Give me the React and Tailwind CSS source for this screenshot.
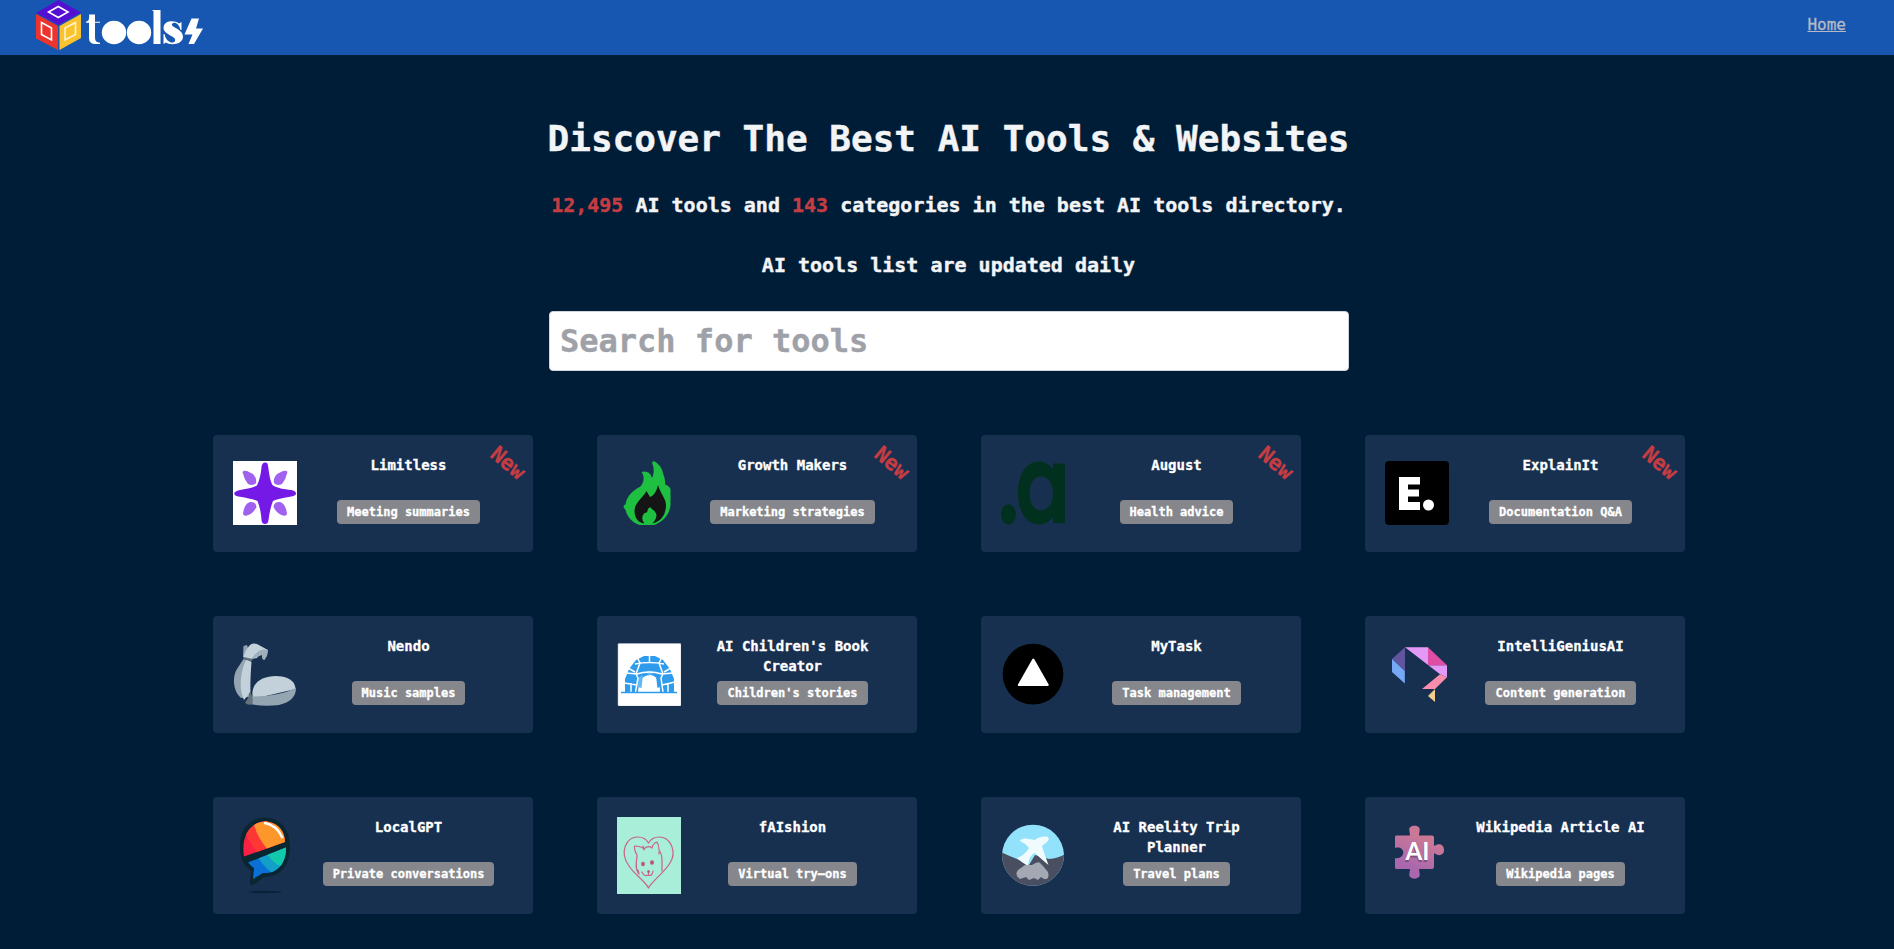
import React from "react";

const svg = "mb-px block h-16 w-16 shrink-0";

const Limitless = () => (
  <svg viewBox="0 0 64 64" className={svg}>
    <rect width="64" height="64" fill="#fff" />
    <g fill="#a062ee">
      <path d="M9.500 11 Q10.500 9 14 10 L20 13 Q24 17 23 22 Q20 25.500 15 23 Q11 18 9.500 11Z" />
      <path d="M54.500 11 Q53.500 9 50 10 L44 13 Q40 17 41 22 Q44 25.500 49 23 Q53 18 54.500 11Z" />
      <path d="M10 53 Q11 55.500 14 54.500 Q20 53 23.500 46 Q23 40.500 17 41 Q11 43 10 53Z" />
      <path d="M54 53 Q53 55.500 50 54.500 Q44 53 40.500 46 Q41 40.500 47 41 Q53 43 54 53Z" />
    </g>
    <path fill="#7519e6" d="M32 1.500 C35 1.500 35 4 35.500 8 C36.500 16 37.500 20 39.500 24 C44 27.500 51 28 58 29 C62 29.800 63 31 63 32.500 C63 34.500 61 35 57 35.700 C49 37 44 38 40 40 C37.500 46 36.500 52 35.500 59 C35 62 34 63 32 63 C30 63 29 62 28.500 59 C28 51 26.500 45 24.500 40 C20 38 14 37 7 35.700 C3 35 1.300 34.500 1.300 32.500 C1.300 31 2.500 30 6 29.200 C13 28 19 27.500 24 24.500 C26.500 19 28 13 28.500 6 C29 3 30 1.500 32 1.500Z" />
  </svg>
);

const GrowthMakers = () => (
  <svg viewBox="-2.500 0 64 64" className={svg}>
    <path fill="#1fbf42" d="M34.500 .3 C40 3 43 8 44 14 Q46 18 45.500 23.500 Q49.500 24.500 51 28 L51 44 C50 54 44 60 35 64 L20 64 C12 61 8 56 6 49 L4 46 Q4 43.500 6 43.500 C7 36 12 30 21 25.500 C25 21 25 15 22 11 Q30 9 32.500 17 C35 12 34.500 6 32.500 2 Q33 0 34.500 .3Z" />
    <path fill="#151515" d="M38.500 24 C41 33 47 38 46.500 45 C46 54 42 60 33 62.500 Q37 58 37 54 C36 49 31 48 31 46 C26 48 30 52 25 52 C22 55 22 59 25 62.500 C19 62 15 57 15 50 C15 42 23 37 27 30 L30.500 36 C35 34 37 30 38.500 24Z" />
  </svg>
);

const August = () => (
  <svg viewBox="0 0 64 64" className={svg}>
    <path fill="#02301f" fillRule="evenodd" d="M52 2.500H64V62H52V56C48 61.500 43 63.500 38 63.500C25 63.500 17 50 17 32C17 14 25 .500 38 .500C43 .500 48 3 52 8ZM40 15.500C33 15.500 28.500 22.500 28.500 32.500C28.500 42 33 49.500 40 49.500C47 49.500 52 42 52 32.500C52 22.500 47 15.500 40 15.500Z" />
    <ellipse cx="7.500" cy="53.500" rx="7.500" ry="10.200" fill="#02301f" />
  </svg>
);

const ExplainIt = () => (
  <svg viewBox="0 0 64 64" className={svg}>
    <rect width="64" height="64" rx="4" fill="#000" />
    <path fill="#fff" d="M14 16H35V23.500H23V28.500H34V35.500H23V41H35V49H14Z" />
    <circle cx="43.500" cy="44" r="5.500" fill="#fff" />
  </svg>
);

const Nendo = () => (
  <svg viewBox="0 0 64 64" className={svg}>
    <path fill="#92a5b0" d="M10.500 4 L14 3 L16 9 L13 16 L10 15ZM10.500 17 L18 19 L16 55 L8 56 C0 49-1 35 4 27Z" />
    <path fill="#c3d1da" d="M17 3 Q19 .500 24 2 L35 8 L34 12 Q27 11 24 16 L17 17 L10.500 15 Q13 7 17 3ZM13 18 L18.500 20 Q17 36 17.500 50 L11 58 C5 47 8 28 13 18Z" />
    <path fill="#9cafbb" d="M34 8 Q36 13 31.500 18 Q28.500 18 29 13 L24 15 L18.500 17 Q26 5 34 8Z" />
    <path fill="#c3d1da" d="M19.500 53 C18 38 35 32 49 34.500 Q62 37 62.500 47 L20 57Z" />
    <path fill="#92a5b0" d="M18 54.500 Q44 55 63 46 Q63 59 46 63 Q30 65 17 62Z" />
    <path fill="#65737c" d="M10.500 15 L19.500 17 L19 19 L10.500 17ZM12 60.500 Q16 56 17 50 Q20.500 54 19.500 62 Q15 64 12 60.500Z" />
  </svg>
);

const Igloo = () => (
  <svg viewBox="0 0 64 64" className={svg}>
    <rect x="1" y="1.500" width="63" height="62.500" rx="1" fill="#fff" stroke="#b5bdc7" strokeWidth=".5" />
    <path fill="#2f9bed" d="M8 50 L8 37 L12 27 L19 18 L27 14 H38 L46 18 L53 27 L57 37 V50Z" />
    <path fill="#fff" d="M21 50 C22 38 24 34 33 33 C41 34 43 40 43 50Z" />
    <path fill="#5eb9f5" d="M20.500 36 L26 33 L24.500 46 L20.500 45ZM29 30 Q33 27 37 30 Q33 36 29 30Z" />
    <path fill="#2f9bed" d="M39 34 L43 36 L43 45 L40.500 46Z" />
    <g fill="none" stroke="#fff" strokeWidth="1.500">
      <path d="M18 22 Q32 19 47 22M9 31 L20 32 Q32 28 45 32 L56 31M7 41 L20 43M45 43 L58 40M32.500 14V21M20 15 L23 21 L19 32 L21 36 L18.500 50M45 15 L42 21 L46 32 L44 36 L46 50M11 26 L18 30M54 26 L47 30M14 41V50M51 41V50" />
    </g>
    <path d="M4 50.500H60" stroke="#2f9bed" strokeWidth="1.300" />
  </svg>
);

const MyTask = () => (
  <svg viewBox="0 0 64 64" className={svg}>
    <circle cx="32" cy="32.200" r="30.400" fill="#000" />
    <path d="M32.300 17.500 L46.800 43H17.800Z" fill="#fff" stroke="#fff" strokeWidth="2" strokeLinejoin="round" />
  </svg>
);

const IntelliGenius = () => (
  <svg viewBox="0 0 64 64" className={svg}>
    <path fill="#62559f" d="M20 5.300V29L7 17Z" />
    <path fill="#75a9f5" d="M7 17L19.800 29V41.500L7 30Z" />
    <path fill="#e29af6" d="M20 5.300H43V23.300H62V35.300L55 32.300Z" />
    <path fill="#e04da5" d="M43 5.300L62 23.300H43Z" />
    <path fill="#fa8dab" d="M55 32.300L62 35.300L50 47H37Z" />
    <path fill="#f4cd8c" d="M50 47V60L43 54Z" />
  </svg>
);

const LocalGPT = () => (
  <svg viewBox="0 0 64 77" className="block h-[77px] w-16 shrink-0">
    <defs>
      <clipPath id="lg-top"><path d="M11 39.500C7 14 23 2 36 5C46 7 52 15 52 25Z" /></clipPath>
      <clipPath id="lg-bottom"><path d="M15 45.500L53 30.500C53 48 43 57 30 56L20 62L21 51Q18 49 15 45.500Z" /></clipPath>
    </defs>
    <path fill="#0a2631" d="M32 .500C47 .500 57 12 57 30C57 48 48 60 31 60L22 67Q17 70 17 65L18 54C10 48 7 40 7 29C7 12 17 .500 32 .500Z" />
    <g clipPath="url(#lg-top)">
      <path fill="#fb2044" d="M0 0H64V45H0Z" />
      <path fill="#fd3734" d="M11 13Q17 27 25 36L40 33L34 0Z" />
      <path fill="#fd972c" d="M20 3Q23 20 36 34L64 30V0Z" />
      <path fill="none" stroke="#fff" strokeWidth="2.500" d="M31 5.700Q44 8 49.500 21" />
    </g>
    <g clipPath="url(#lg-bottom)">
      <path fill="#0b70d6" d="M0 30H64V70H0Z" />
      <path fill="#129fc8" d="M22 36Q28 47 40 57L57 48V27Z" />
      <path fill="#13c9ac" d="M32 32Q36 44 49 50L60 45V25Z" />
    </g>
    <ellipse cx="32" cy="75" rx="17" ry="1.200" fill="#0a2238" />
  </svg>
);

const FAIshion = () => (
  <svg viewBox="0 0 64 77" className="block h-[77px] w-16 shrink-0">
    <path fill="#a9eed8" d="M0 0H64V77H0Z" />
    <g fill="none" stroke="#c9628c" strokeWidth="1.200" strokeLinejoin="round" strokeLinecap="round">
      <path d="M31.500 71 C28 64 17 57 12 49 C2 35 9 20 21 20 Q28 20 31.500 26 Q35 20 42 20 C54 20 60 35 53 46 C47 56 36 63 31.500 71Z" />
      <path d="M22 57 C17 51 20 44 20 38 Q17 33 17.500 29 Q24 29 27 32 Q31 28 35 31 Q36 26 40 25 Q42 28 42 33 Q45 37 45 43 L45 54M27 33 L26 29M22 57 L21 53M42 35V37" />
      <path d="M25 55 Q27 60 31 58 Q35 60 36 54M31.500 54V58" />
    </g>
    <g fill="#c0527e"><ellipse cx="26" cy="47" rx="1.900" ry="2.200" /><ellipse cx="35" cy="45.500" rx="2" ry="2.300" /><circle cx="31.500" cy="54.500" r="1.300" /></g>
  </svg>
);

const TripPlanner = () => (
  <svg viewBox="0 0 64 64" className={svg}>
    <defs><clipPath id="trip"><ellipse cx="32" cy="32.300" rx="31" ry="30.500" /></clipPath></defs>
    <g clipPath="url(#trip)">
      <path fill="#91e2fa" d="M0 0H64V64H0Z" />
      <path fill="#494f61" d="M0 29Q8 33 16 36L28 42L34 32L48 36Q58 35 64 31V64H0Z" />
      <path fill="#f0fbfd" d="M19 18Q20 15 25 15.500L34 17Q38 13 46 13.500Q49 15 47 18L41 23Q43 30 47.500 42Q39 35 34 30Q28 32 27 43Q20 39 16 35Q24 32 28 25Q24 20 19 18Z" />
      <path fill="#a4a8b3" d="M24 42L31 42Q37 38 39 40L42 43L47 49Q49 57 43 56L40 54L37 57L33 55L28 57L25 54L19 56Q13 52 17 47Z" />
    </g>
  </svg>
);

const Wikipedia = () => (
  <svg viewBox="0 0 64 64" className={svg}>
    <defs>
      <linearGradient id="wiki" x1=".7" y1="0" x2=".3" y2="1">
        <stop offset=".25" stopColor="#ca7896" /><stop offset=".8" stopColor="#a967ad" />
      </linearGradient>
    </defs>
    <path fill="url(#wiki)" d="M11 12.500H25L24.500 8C22 1 37 1 34.500 8L34 12.500H47Q49 12.500 49 14.500V23C55 19 59 22 59 27C59 32 54 34 49 30V44Q49 46 47 46H34L34.500 50C37 57.500 22 57.500 24.500 50L25 46H11Q10 46 10 44V35C21 37 21 22 10 25V14.500Q10 12.500 11 12.500Z" />
    <text x="32" y="38.500" textAnchor="middle" fill="#3b2c5b" opacity=".45" className="font-['Lato','sans-serif'] text-[24px] font-bold">AI</text>
    <text x="32.500" y="37" textAnchor="middle" fill="#fff" className="font-['Lato','sans-serif'] text-[24px] font-bold">AI</text>
  </svg>
);

const tools = [
  { name: "Limitless", tag: "Meeting summaries", Icon: Limitless, isNew: true },
  { name: "Growth Makers", tag: "Marketing strategies", Icon: GrowthMakers, isNew: true },
  { name: "August", tag: "Health advice", Icon: August, isNew: true },
  { name: "ExplainIt", tag: "Documentation Q&A", Icon: ExplainIt, isNew: true },
  { name: "Nendo", tag: "Music samples", Icon: Nendo },
  { name: "AI Children's Book Creator", tag: "Children's stories", Icon: Igloo },
  { name: "MyTask", tag: "Task management", Icon: MyTask },
  { name: "IntelliGeniusAI", tag: "Content generation", Icon: IntelliGenius },
  { name: "LocalGPT", tag: "Private conversations", Icon: LocalGPT },
  { name: "fAIshion", tag: "Virtual try–ons", Icon: FAIshion },
  { name: "AI Reelity Trip Planner", tag: "Travel plans", Icon: TripPlanner },
  { name: "Wikipedia Article AI", tag: "Wikipedia pages", Icon: Wikipedia },
];

function ToolCard({ name, tag, Icon, isNew }) {
  return (
    <article className="relative flex h-[117px] items-center rounded bg-[#183050] pl-5">
      <Icon />
      <div className="ml-5 flex w-[183px] flex-col items-center self-start pt-5 text-center">
        <h2 className="h-10 text-sm leading-5 font-bold [-webkit-text-stroke:0.3px]">{name}</h2>
        <span className="mt-[5px] h-6 rounded bg-[#86878c] px-2.5 text-xs leading-6 font-bold whitespace-nowrap [-webkit-text-stroke:0.3px]">{tag}</span>
      </div>
      {isNew && (
        <span className="absolute top-[14px] right-[6px] rotate-[40deg] text-[21px] leading-7 font-bold text-[#c53d43] [-webkit-text-stroke:0.3px]">New</span>
      )}
    </article>
  );
}

function Logo() {
  return (
    <a className="flex items-start pl-9">
      <svg viewBox="0 0 170 55" className="block h-[55px] w-[170px]">
        <path fill="#5310d2" d="M22.500 0L45 12.500L22.500 25L0 13Z" />
        <path fill="#ec342c" d="M0 14L22 26V50L0 38.500Z" />
        <path fill="#fac32d" d="M45 14V38L23.500 50V26Z" />
        <g fill="none" stroke="#fff" strokeWidth="1.600">
          <path d="M22.300 6.500L32 12L22.300 17.500L12.500 12Z" />
          <path d="M5.500 22.500L15.500 28V40L5.500 34.500Z" />
          <path stroke="#fff3cd" d="M39.500 22.500L29 28V40L39.500 34.500Z" />
        </g>
        <g fill="#fff">
          <path d="M50 21.700Q54 21 53 14.500H59V21.700H64V22.800H59V38Q59 42.500 64 42.700V44H59.500Q53 44 53 38V22.800H50Z" />
          <ellipse cx="78" cy="32.500" rx="12.200" ry="11.700" />
          <ellipse cx="103" cy="32.500" rx="12.200" ry="11.700" />
          <path d="M116.500 10H124.500V44H117.500V11H116.500Z" />
          <path d="M145.500 22V30H144.500C143 23 138 21.500 136 24C134 27 147 29 147 36.500C147 45 134 45.500 130 42.500L127.500 44V34H128.500C130 42 137 44.500 139 41C141 36 127.500 35 127.500 28C127.500 20 139 20 143 23.500Z" />
          <path d="M155.500 18.500H163L160 28.500H167L158 44H152.500L156.500 34.500H148.500Z" />
        </g>
      </svg>
    </a>
  );
}

export default function App() {
  return (
    <div className="h-[949px] overflow-hidden bg-[#001d38] font-['DejaVu_Sans_Mono','Liberation_Mono',monospace] text-white">
      <header className="flex h-[55px] justify-between bg-[#1757b1]">
        <Logo />
        <nav className="pt-[13px] pr-12">
          <a className="text-base leading-6 text-[#b6bac4] underline [-webkit-text-stroke:0.3px]">Home</a>
        </nav>
      </header>
      <main className="flex flex-col items-center pl-1">
        <div className="flex flex-col items-center pr-px font-bold text-[#f3f4f6] [-webkit-text-stroke:0.4px]">
          <h1 className="mt-16 text-4xl leading-10">Discover The Best AI Tools &amp; Websites</h1>
          <p className="mt-8 text-xl leading-7">
            <span className="text-[#c53d43]">12,495</span> AI tools and <span className="text-[#c53d43]">143</span> categories in the best AI tools directory.
          </p>
          <p className="mt-8 text-xl leading-7">AI tools list are updated daily</p>
        </div>
        <input
          placeholder="Search for tools"
          className="mt-8 h-[60px] w-[800px] rounded border border-[#d1d5db] bg-white px-2.5 text-[32px] font-bold [-webkit-text-stroke:0.4px] placeholder:text-[#9fa1a8]"
        />
        <section className="mt-16 grid grid-cols-[repeat(4,320px)] gap-16">
          {tools.map((tool) => (
            <ToolCard key={tool.name} {...tool} />
          ))}
        </section>
      </main>
    </div>
  );
}
